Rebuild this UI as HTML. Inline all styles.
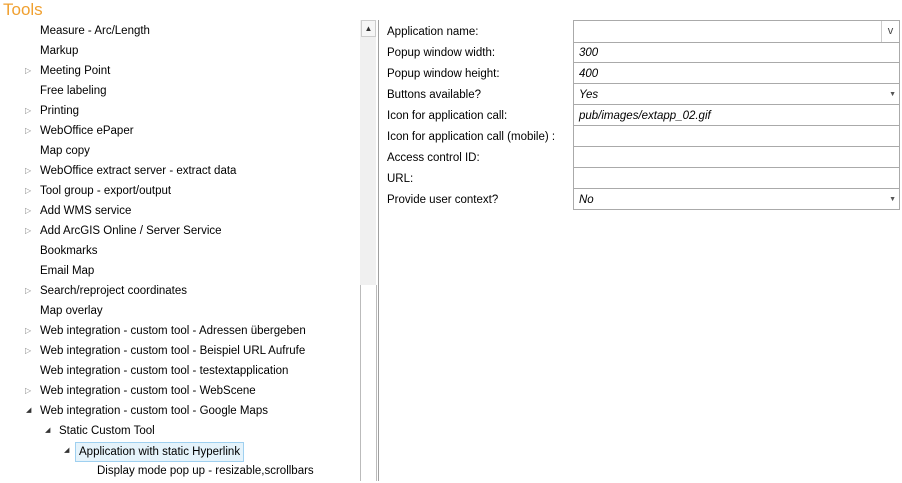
<!DOCTYPE html>
<html><head><style>
body{margin:0;width:902px;height:481px;background:#fff;font-family:"Liberation Sans",sans-serif;font-size:11.5px;color:#000;position:relative;overflow:hidden}
.t{position:absolute;left:3px;top:0;font-size:17px;color:#f0a030}
.tree{position:absolute;left:0;top:2px;width:360px;height:481px}
.it{position:absolute;height:20px;line-height:20px;white-space:nowrap}
.ar{position:absolute;font-size:8px;color:#888;line-height:20px}
.sb{position:absolute;left:360px;top:20px;width:16px;height:265px;background:#f0f0f0}
.lbl{position:absolute;left:387px;height:21px;line-height:21px}
.rp{position:absolute;left:0;top:1px;width:902px;height:300px}
.v{position:absolute;left:573px;height:20px;line-height:20px;border:1px solid #aaa;border-top:none;font-style:italic;box-sizing:content-box;padding-left:5px;width:320px}
</style></head><body>
<div class="t">Tools</div>
<div class="sb"></div>
<div style="position:absolute;left:360px;top:285px;width:15px;height:196px;border-left:1px solid #bbb;border-right:1px solid #bbb"></div>
<div style="position:absolute;left:378px;top:20px;width:1px;height:461px;background:#a0a0a0"></div>
<div style="position:absolute;left:361px;top:20px;width:15px;height:17px;border:1px solid #ccc;box-sizing:border-box;background:#f6f6f6;font-size:8px;text-align:center;line-height:16px;color:#333">▲</div>

<div class="tree">
<div class="it" style="left:40px;top:19px">Measure - Arc/Length</div>
<div class="it" style="left:40px;top:39px">Markup</div>
<div class="ar" style="left:25px;top:59px">▷</div><div class="it" style="left:40px;top:59px">Meeting Point</div>
<div class="it" style="left:40px;top:79px">Free labeling</div>
<div class="ar" style="left:25px;top:99px">▷</div><div class="it" style="left:40px;top:99px">Printing</div>
<div class="ar" style="left:25px;top:119px">▷</div><div class="it" style="left:40px;top:119px">WebOffice ePaper</div>
<div class="it" style="left:40px;top:139px">Map copy</div>
<div class="ar" style="left:25px;top:159px">▷</div><div class="it" style="left:40px;top:159px">WebOffice extract server - extract data</div>
<div class="ar" style="left:25px;top:179px">▷</div><div class="it" style="left:40px;top:179px">Tool group - export/output</div>
<div class="ar" style="left:25px;top:199px">▷</div><div class="it" style="left:40px;top:199px">Add WMS service</div>
<div class="ar" style="left:25px;top:219px">▷</div><div class="it" style="left:40px;top:219px">Add ArcGIS Online / Server Service</div>
<div class="it" style="left:40px;top:239px">Bookmarks</div>
<div class="it" style="left:40px;top:259px">Email Map</div>
<div class="ar" style="left:25px;top:279px">▷</div><div class="it" style="left:40px;top:279px">Search/reproject coordinates</div>
<div class="it" style="left:40px;top:299px">Map overlay</div>
<div class="ar" style="left:25px;top:319px">▷</div><div class="it" style="left:40px;top:319px">Web integration - custom tool - Adressen übergeben</div>
<div class="ar" style="left:25px;top:339px">▷</div><div class="it" style="left:40px;top:339px">Web integration - custom tool - Beispiel URL Aufrufe</div>
<div class="it" style="left:40px;top:359px">Web integration - custom tool - testextapplication</div>
<div class="ar" style="left:25px;top:379px">▷</div><div class="it" style="left:40px;top:379px">Web integration - custom tool - WebScene</div>
<div class="ar" style="left:26px;top:399px;color:#333;font-size:7px">◢</div><div class="it" style="left:40px;top:399px">Web integration - custom tool - Google Maps</div>
<div class="ar" style="left:45px;top:419px;color:#333;font-size:7px">◢</div><div class="it" style="left:59px;top:419px">Static Custom Tool</div>
<div class="ar" style="left:64px;top:439px;color:#333;font-size:7px">◢</div>
<div class="it" style="left:75px;top:440px;height:18px;line-height:18px;padding:0 3px;background:#e5f3fb;border:1px solid #9fd0f0">Application with static Hyperlink</div>
<div class="it" style="left:97px;top:459px">Display mode pop up - resizable,scrollbars</div>
</div>

<div class="rp">
<div class="lbl" style="top:21px">Application name:</div>
<div class="lbl" style="top:42px">Popup window width:</div>
<div class="lbl" style="top:63px">Popup window height:</div>
<div class="lbl" style="top:84px">Buttons available?</div>
<div class="lbl" style="top:105px">Icon for application call:</div>
<div class="lbl" style="top:126px">Icon for application call (mobile) :</div>
<div class="lbl" style="top:147px">Access control ID:</div>
<div class="lbl" style="top:168px">URL:</div>
<div class="lbl" style="top:189px">Provide user context?</div>
</div>

<div class="v" style="top:20px;border-top:1px solid #aaa;height:21px"></div>
<div style="position:absolute;left:881px;top:21px;width:17px;height:21px;border-left:1px solid #ccc;text-align:center;line-height:21px;font-size:11px;color:#444">v</div>
<div class="v" style="top:42px;line-height:22px">300</div>
<div class="v" style="top:63px;line-height:22px">400</div>
<div class="v" style="top:84px;line-height:22px">Yes<span style="position:absolute;right:3px;font-size:7px;font-style:normal;color:#555">▼</span></div>
<div class="v" style="top:105px;line-height:22px">pub/images/extapp_02.gif</div>
<div class="v" style="top:126px"></div>
<div class="v" style="top:147px"></div>
<div class="v" style="top:168px"></div>
<div class="v" style="top:189px;line-height:22px">No<span style="position:absolute;right:3px;font-size:7px;font-style:normal;color:#555">▼</span></div>
</body></html>
